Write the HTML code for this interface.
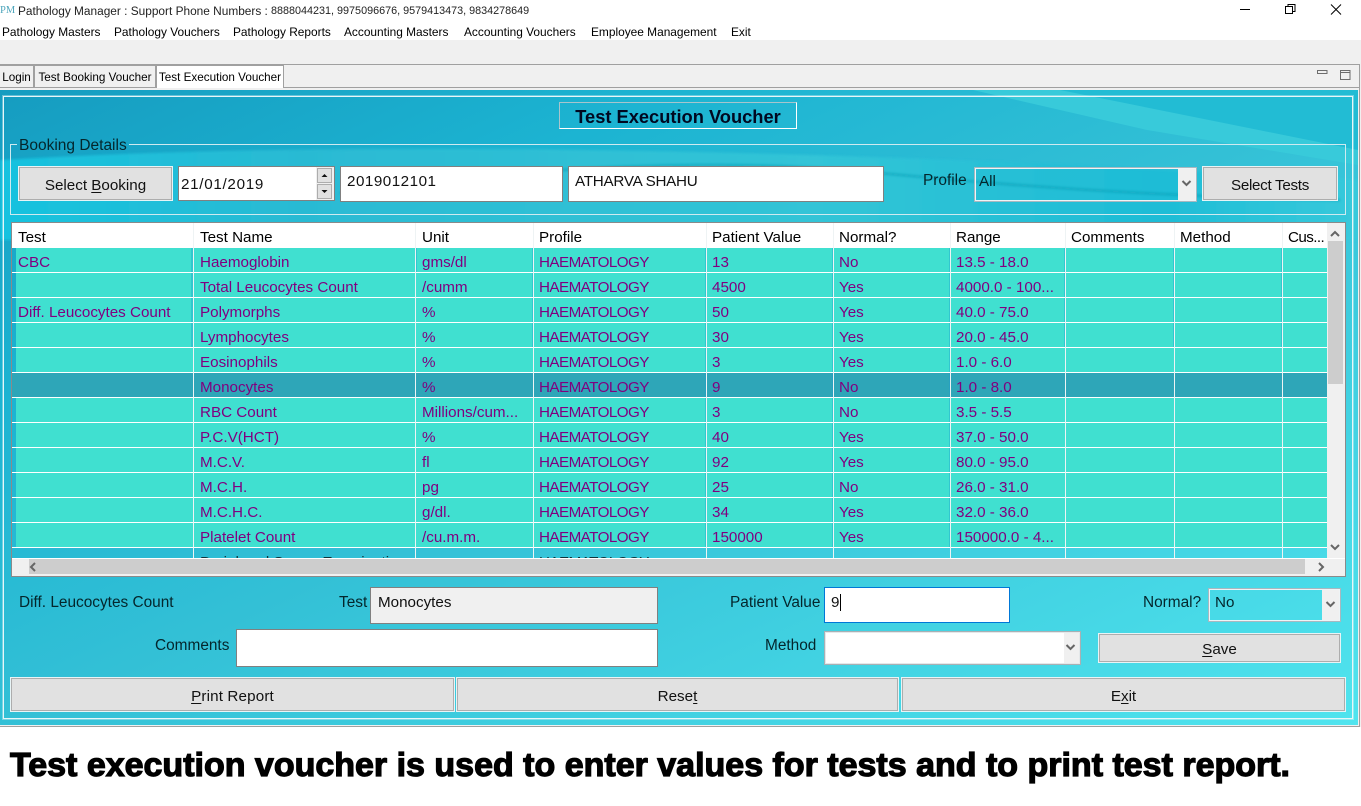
<!DOCTYPE html>
<html><head><meta charset="utf-8"><style>
html,body{margin:0;padding:0;width:1361px;height:806px;overflow:hidden;background:#fff}
body{position:relative;font-family:"Liberation Sans",sans-serif;color:#000}
div,span{position:absolute;box-sizing:border-box;white-space:nowrap}
.m{top:24px;font-size:11.9px;line-height:16px;color:#000}
.tab{top:65px;height:23px;font-size:11.7px;line-height:23px;background:#f0f0f0;border:1px solid #a0a0a0;border-bottom:none;text-align:center}
.l{font-size:15.4px;line-height:24px;color:#04262c}
.in{background:#fff;border:1px solid #808080;font-size:15.2px;line-height:30px;padding-left:6px;color:#111}
.b{background:#e1e1e1;border:1px solid #adadad;outline:1px solid #e8f4f6;font-size:15.2px;text-align:center;color:#111}
.cb{border:2px solid #eef4f6;outline:1px solid #a8b8c0;outline-offset:-1px;font-size:15.2px;line-height:26px;padding-left:3px;color:#04262c}
.ar{top:0;bottom:0;right:0;width:17px;background:#f0f0f0}
.h{top:0;height:25px;font-size:15.2px;line-height:29px;color:#000}
.r{left:0;width:1316px;height:25px}
.r span{top:0;line-height:29px;font-size:15.2px;color:#800080}
.r span:nth-child(1){left:6px}.r span:nth-child(2){left:188px}.r span:nth-child(3){left:410px}.r span:nth-child(4){left:527px;letter-spacing:-.55px}.r span:nth-child(5){left:700px}.r span:nth-child(6){left:827px}.r span:nth-child(7){left:944px}
.bg{background:#40e0d0}
.s{top:25px;width:2px;height:299px;background:rgba(30,150,205,.35)}
.z{top:0;width:1px;height:336px;background:#eef3f4}
.hl{left:0;width:1316px;height:1px;background:#fff}
u{text-decoration:underline;text-underline-offset:2px}
</style></head><body>

<svg style="position:absolute;left:0;top:2px" width="16" height="14"><text x="0" y="11" font-family="Liberation Serif,serif" font-size="10.500" fill="#4fa6bc">PM</text></svg>
<div style="left:18px;top:3px;font-size:11.87px;line-height:16px;color:#222">Pathology Manager : Support Phone Numbers :</div>
<div style="left:271px;top:3px;font-size:10.8px;line-height:16px;color:#222">8888044231, 9975096676, 9579413473, 9834278649</div>
<svg style="position:absolute;left:1230px;top:0" width="131" height="20" fill="none" stroke="#000" stroke-width="1">
<path d="M10 9.5H20"/><path d="M55.5 6.5h7v7h-7zM58 6.5V4.5h7v7h-2"/><path d="M101 4.5l10 10M111 4.5l-10 10"/></svg>
<div class="m" style="left:2px">Pathology Masters</div>
<div class="m" style="left:114px">Pathology Vouchers</div>
<div class="m" style="left:233px">Pathology Reports</div>
<div class="m" style="left:344px">Accounting Masters</div>
<div class="m" style="left:464px">Accounting Vouchers</div>
<div class="m" style="left:591px">Employee Management</div>
<div class="m" style="left:731px">Exit</div>

<div style="left:0;top:40px;width:1361px;height:687px;background:#f0f0f0"></div>
<div style="left:0;top:64px;width:1360px;height:663px;border:1px solid #a0a0a0;border-left:none;background:#f0f0f0"></div>
<div class="tab" style="left:-1px;width:35px">Login</div>
<div class="tab" style="left:34px;width:122px">Test Booking Voucher</div>
<div class="tab" style="left:156px;width:128px;background:#fff">Test Execution Voucher</div>
<div style="left:284px;top:87px;width:1075px;height:1px;background:#a0a0a0"></div>
<div style="left:0;top:87px;width:156px;height:1px;background:#a0a0a0"></div>
<svg style="position:absolute;left:1315px;top:68px" width="40" height="14" fill="none" stroke="#6d6d6d" stroke-width="1"><rect x="2.500" y="2.500" width="9.500" height="3"/><rect x="25.500" y="2.500" width="9.500" height="9"/><path d="M25.500 4.500h9.500"/></svg>

<svg style="position:absolute;left:0;top:90px" width="1358" height="635">
<defs>
<linearGradient id="g" x1="0" y1="0" x2="1" y2="1"><stop offset="0" stop-color="#169cc0"/><stop offset=".25" stop-color="#1cb4d2"/><stop offset=".5" stop-color="#33c0d6"/><stop offset="1" stop-color="#50e4ee"/></linearGradient>
<linearGradient id="t" x1="0" y1="0" x2="1" y2="0"><stop offset="0" stop-color="#16c6e2"/><stop offset=".22" stop-color="#2cbcd4"/><stop offset=".6" stop-color="#34c6d8"/><stop offset=".85" stop-color="#1cbcd6"/><stop offset="1" stop-color="#38cadc"/></linearGradient>
<filter id="f"><feGaussianBlur stdDeviation="1.200"/></filter>
</defs>
<rect width="1358" height="635" fill="url(#g)"/>
<path d="M0 70Q500 40 1358 90V150H0Z" fill="url(#t)" opacity=".9" filter="url(#f)"/>
<path d="M973 0H1358V60Z" fill="#22bcd4"/>
<path d="M973 0H1060L1358 60V75L1147 40Z" fill="#38cada"/>
<path d="M340 103Q650 60 880 83T1340 110" fill="none" stroke="#0f9cb4" stroke-width="1.800" opacity=".75" filter="url(#f)"/>
</svg>
<div style="left:3px;top:96px;width:1350px;height:623px;border:1px solid #e8f6f8;outline:1px solid rgba(255,255,255,.35)"></div>

<div style="left:559px;top:102px;width:238px;height:27px;border:1px solid #fff;border-color:#a8c4cc #fff #fff #a8c4cc;text-align:center;font-weight:bold;font-size:18.3px;line-height:28px;color:#000820">Test Execution Voucher</div>

<div style="left:10px;top:144px;width:1336px;height:71px;border:1px solid #cfeaf0;border-top:none"></div>
<div style="left:10px;top:144px;width:7px;height:1px;background:#cfeaf0"></div>
<div style="left:129px;top:144px;width:1217px;height:1px;background:#cfeaf0"></div>
<div style="left:19px;top:134px;font-size:15.5px;line-height:24px;color:#04262c">Booking Details</div>

<div class="b" style="left:19px;top:167px;width:153px;height:33px;line-height:35px"><span style="position:static">Select <u>B</u>ooking</span></div>
<div class="in" style="left:178px;top:166px;width:157px;height:35px;line-height:36px;padding-left:2px;letter-spacing:.7px">21/01/2019</div>
<svg style="position:absolute;left:316px;top:167px" width="18" height="33"><rect width="18" height="33" fill="#f0f0f0"/><rect x="1.500" y="1.500" width="14" height="14" fill="#e1e1e1" stroke="#adadad"/><rect x="1.500" y="17.500" width="14" height="14" fill="#e1e1e1" stroke="#adadad"/><path d="M5.500 10l3-3 3 3z M5.500 23l3 3 3-3z" fill="#111"/></svg>
<div class="in" style="left:340px;top:166px;width:223px;height:36px;letter-spacing:.5px">2019012101</div>
<div class="in" style="left:568px;top:166px;width:316px;height:36px;letter-spacing:-.25px">ATHARVA SHAHU</div>
<div class="l" style="left:923px;top:169px">Profile</div>
<div class="cb" style="left:974px;top:167px;width:223px;height:35px;line-height:25px"><span class="ar" style="width:17px"></span>All</div>
<svg style="position:absolute;left:1181px;top:179px" width="12" height="10" fill="none" stroke="#666" stroke-width="2"><path d="M1.500 2l4 4 4-4"/></svg>
<div class="b" style="left:1203px;top:167px;width:134px;height:33px;line-height:35px;letter-spacing:-.3px">Select Tests</div>

<div style="left:11px;top:222px;width:1335px;height:355px;border:1px solid #8a8a8a;overflow:hidden">
 <div style="left:0;top:0;width:1316px;height:25px;background:#fff"></div>
 <div class="h" style="left:6px">Test</div><div class="h" style="left:188px">Test Name</div><div class="h" style="left:410px">Unit</div><div class="h" style="left:527px">Profile</div><div class="h" style="left:700px">Patient Value</div><div class="h" style="left:827px">Normal?</div><div class="h" style="left:944px">Range</div><div class="h" style="left:1059px">Comments</div><div class="h" style="left:1168px">Method</div><div class="h" style="left:1276px;letter-spacing:-.6px">Cus...</div>

 <div class="bg" style="left:4px;top:25px;width:1312px;height:299px"></div>
 <div style="left:0;top:150px;width:1316px;height:24px;background:#2ea6b8"></div>
 <div class="s" style="left:179px;height:100px"></div><div class="s" style="left:520px;height:100px"></div><div class="s" style="left:1052px;height:100px"></div><div class="s" style="left:1161px;height:100px"></div><div class="s" style="left:1269px;height:100px"></div><div class="s" style="left:403px;height:25px"></div><div class="s" style="left:693px"></div><div class="s" style="left:820px"></div><div class="s" style="left:937px"></div>

 <div class="r" style="top:25px"><span>CBC</span><span>Haemoglobin</span><span>gms/dl</span><span>HAEMATOLOGY</span><span>13</span><span>No</span><span>13.5 - 18.0</span></div>
 <div class="r" style="top:50px"><span></span><span>Total Leucocytes Count</span><span>/cumm</span><span>HAEMATOLOGY</span><span>4500</span><span>Yes</span><span>4000.0 - 100...</span></div>
 <div class="r" style="top:75px"><span>Diff. Leucocytes Count</span><span>Polymorphs</span><span>%</span><span>HAEMATOLOGY</span><span>50</span><span>Yes</span><span>40.0 - 75.0</span></div>
 <div class="r" style="top:100px"><span></span><span>Lymphocytes</span><span>%</span><span>HAEMATOLOGY</span><span>30</span><span>Yes</span><span>20.0 - 45.0</span></div>
 <div class="r" style="top:125px"><span></span><span>Eosinophils</span><span>%</span><span>HAEMATOLOGY</span><span>3</span><span>Yes</span><span>1.0 - 6.0</span></div>
 <div class="r" style="top:150px"><span></span><span>Monocytes</span><span>%</span><span>HAEMATOLOGY</span><span>9</span><span>No</span><span>1.0 - 8.0</span></div>
 <div class="r" style="top:175px"><span></span><span>RBC Count</span><span>Millions/cum...</span><span>HAEMATOLOGY</span><span>3</span><span>No</span><span>3.5 - 5.5</span></div>
 <div class="r" style="top:200px"><span></span><span>P.C.V(HCT)</span><span>%</span><span>HAEMATOLOGY</span><span>40</span><span>Yes</span><span>37.0 - 50.0</span></div>
 <div class="r" style="top:225px"><span></span><span>M.C.V.</span><span>fl</span><span>HAEMATOLOGY</span><span>92</span><span>Yes</span><span>80.0 - 95.0</span></div>
 <div class="r" style="top:250px"><span></span><span>M.C.H.</span><span>pg</span><span>HAEMATOLOGY</span><span>25</span><span>No</span><span>26.0 - 31.0</span></div>
 <div class="r" style="top:275px"><span></span><span>M.C.H.C.</span><span>g/dl.</span><span>HAEMATOLOGY</span><span>34</span><span>Yes</span><span>32.0 - 36.0</span></div>
 <div class="r" style="top:300px"><span></span><span>Platelet Count</span><span>/cu.m.m.</span><span>HAEMATOLOGY</span><span>150000</span><span>Yes</span><span>150000.0 - 4...</span></div>
 <div class="r" style="top:325px;height:10px;overflow:hidden"><span></span><span style="color:#12323a">Peripheral Smear Examination</span><span></span><span style="color:#12323a">HAEMATOLOGY</span></div>

 <div class="hl" style="top:49px"></div><div class="hl" style="top:74px"></div><div class="hl" style="top:99px"></div><div class="hl" style="top:124px"></div><div class="hl" style="top:149px"></div><div class="hl" style="top:174px"></div><div class="hl" style="top:199px"></div><div class="hl" style="top:224px"></div><div class="hl" style="top:249px"></div><div class="hl" style="top:274px"></div><div class="hl" style="top:299px"></div><div class="hl" style="top:324px"></div>
 <div class="z" style="left:181px"></div><div class="z" style="left:403px"></div><div class="z" style="left:521px"></div><div class="z" style="left:694px"></div><div class="z" style="left:821px"></div><div class="z" style="left:938px"></div><div class="z" style="left:1053px"></div><div class="z" style="left:1162px"></div><div class="z" style="left:1270px"></div>

 <div style="left:1315px;top:0;width:19px;height:353px;background:#f0f0f0"></div>
 <div style="left:1316px;top:18px;width:15px;height:143px;background:#cdcdcd"></div>
 <div style="left:0;top:335px;width:1334px;height:18px;background:#f0f0f0;border-top:1px solid #fff"></div>
 <div style="left:17px;top:336px;width:1276px;height:15px;background:#cdcdcd"></div>
 <svg style="position:absolute;left:0;top:0" width="1333" height="353" fill="none" stroke="#666" stroke-width="2"><path d="M1319 13l4-4 4 4M1319 322l4 4 4-4M23 340l-4 4 4 4M1307 340l4 4-4 4"/></svg>
</div>

<div class="l" style="left:19px;top:591px">Diff. Leucocytes Count</div>
<div class="l" style="left:339px;top:591px">Test</div>
<div class="in" style="left:370px;top:587px;width:288px;height:37px;background:#f0f0f0;padding-left:7px">Monocytes</div>
<div class="l" style="left:730px;top:591px">Patient Value</div>
<div class="in" style="left:824px;top:587px;width:186px;height:36px;border-color:#0078d7">9<span style="position:static;border-left:1px solid #000;margin-left:1px"></span></div>
<div class="l" style="left:1143px;top:591px">Normal?</div>
<div class="cb" style="left:1208px;top:588px;width:133px;height:34px;padding-left:5px"><span class="ar" style="width:17px"></span>No</div>
<svg style="position:absolute;left:1325px;top:600px" width="12" height="10" fill="none" stroke="#666" stroke-width="2"><path d="M1.500 2l4 4 4-4"/></svg>
<div class="l" style="left:155px;top:634px">Comments</div>
<div class="in" style="left:236px;top:629px;width:422px;height:38px"></div>
<div class="l" style="left:765px;top:634px">Method</div>
<div class="in" style="left:824px;top:631px;width:257px;height:34px;border:2px solid #e4e8ea;outline:1px solid #a8b0b4;outline-offset:-1px"><span class="ar" style="width:15px"></span></div>
<svg style="position:absolute;left:1065px;top:643px" width="12" height="10" fill="none" stroke="#666" stroke-width="2"><path d="M1.500 2l4 4 4-4"/></svg>
<div class="b" style="left:1099px;top:634px;width:241px;height:28px;line-height:29px"><u>S</u>ave</div>
<div class="b" style="left:11px;top:678px;width:443px;height:33px;line-height:35px;letter-spacing:.15px"><u>P</u>rint Report</div>
<div class="b" style="left:457px;top:678px;width:441px;height:33px;line-height:35px">Rese<u>t</u></div>
<div class="b" style="left:902px;top:678px;width:443px;height:33px;line-height:35px">E<u>x</u>it</div>

<svg style="position:absolute;left:0;top:740px" width="1361" height="50"><text x="10" y="36" textLength="1280" lengthAdjust="spacingAndGlyphs" font-family="Liberation Sans,sans-serif" font-weight="bold" font-size="33" fill="#000" stroke="#000" stroke-width="1.200">Test execution voucher is used to enter values for tests and to print test report.</text></svg>
</body></html>
